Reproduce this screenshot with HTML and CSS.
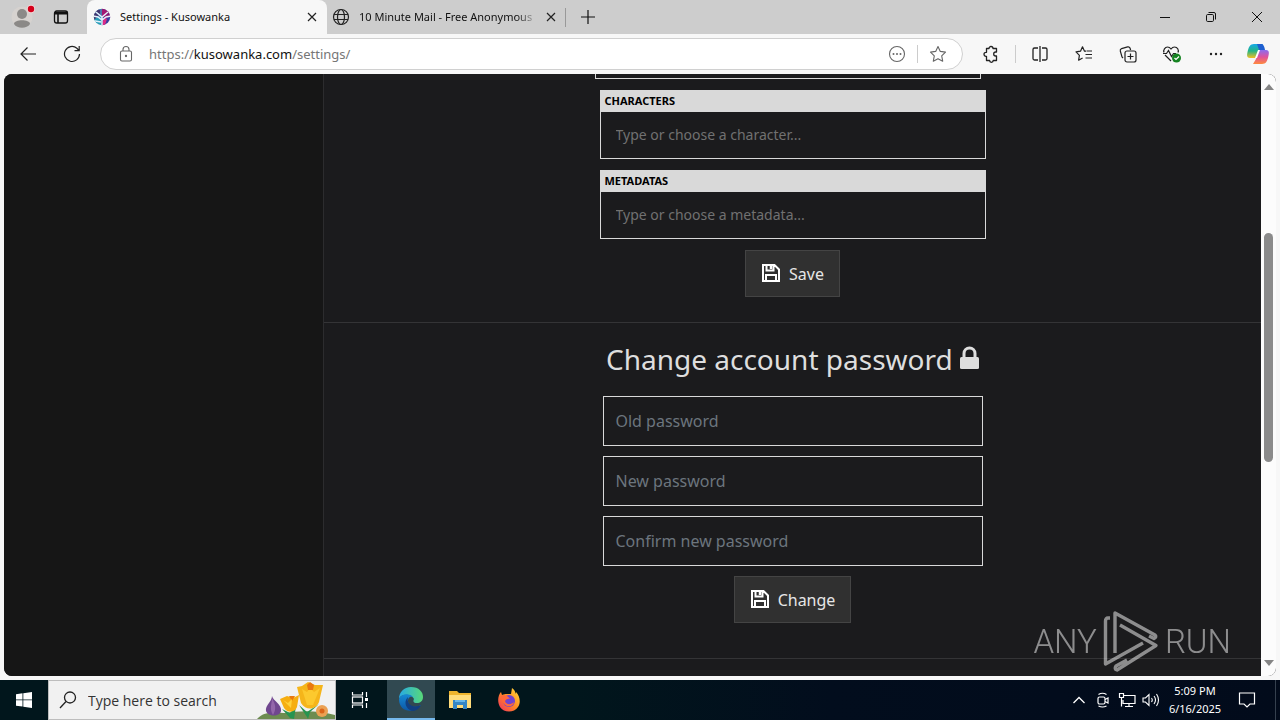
FILE: index.html
```html
<!DOCTYPE html>
<html lang="en">
<head>
<meta charset="utf-8">
<meta name="viewport" content="width=device-width, initial-scale=1">
<title>Settings - Kusowanka</title>
<link rel="stylesheet" href="styles.css">
</head>
<body>
<header class="tabstrip">
  <button class="profile" aria-label="Profile">
    <svg width="24" height="24" viewBox="0 0 24 24"><circle cx="11" cy="13" r="10.500" fill="#d6d2cf"/><circle cx="11" cy="10" r="5" fill="#8b8987"/><path d="M3 20c0-5 16-5 16 0-3 5-13 5-16 0z" fill="#8b8987"/><circle cx="20" cy="5" r="4.200" fill="#f1d6d6"/><circle cx="20" cy="5" r="3.200" fill="#d4001a"/></svg>
  </button>
  <button class="workspaces" aria-label="Tab actions">
    <svg width="16" height="16" viewBox="0 0 16 16" fill="none" stroke="#111" stroke-width="1.300"><rect x="1.500" y="2" width="13" height="12" rx="2.200"/><path d="M2 3.500h12M2 4.800h12M5 5v9" stroke-width="1.600"/></svg>
  </button>
  <div class="tab tab-active">
    <svg class="favicon" width="18" height="18" viewBox="0 0 18 18"><defs><clipPath id="round"><circle cx="9" cy="9" r="8.200"/></clipPath></defs><g clip-path="url(#round)"><path d="M0 0h9v10H0z" fill="#4d78ad"/><path d="M9 0h9v10H9z" fill="#7c1d78"/><path d="M0 9h9v9H0z" fill="#279cb8"/><path d="M9 9h9v9H9z" fill="#3a3c9f"/><path d="M9 1l5 2 1 7-4-2-2 1z" fill="#a31873"/><path d="M11 9l3 2-2 6h-3z" fill="#dc2b86"/><path d="M1 4l5 3-5 5zM3 1l4 1v4L3 4z" fill="#41366f"/><path d="M0 8l5 1 4 3 4-3 5-1M3 4l6 5 6-5M9 9v9M2 13l6 1" stroke="#e4f1fb" stroke-width="1.400" fill="none"/></g></svg>
    <span class="tab-title">Settings - Kusowanka</span>
    <button class="tab-close" aria-label="Close tab"><svg width="10" height="10" viewBox="0 0 10 10" stroke="#222" stroke-width="1.200"><path d="M1 1l8 8M9 1L1 9"/></svg></button>
  </div>
  <div class="tab">
    <svg class="favicon" width="18" height="18" viewBox="0 0 18 18" fill="none" stroke="#222" stroke-width="1.200"><circle cx="9" cy="9" r="7.500"/><ellipse cx="9" cy="9" rx="3.500" ry="7.500"/><path d="M2 6.500h14M2 11.500h14"/></svg>
    <span class="tab-title tab-fade">10 Minute Mail - Free Anonymous</span>
    <button class="tab-close" aria-label="Close tab"><svg width="10" height="10" viewBox="0 0 10 10" stroke="#222" stroke-width="1.200"><path d="M1 1l8 8M9 1L1 9"/></svg></button>
  </div>
  <button class="new-tab" aria-label="New tab"><svg width="14" height="14" viewBox="0 0 14 14" stroke="#111" stroke-width="1.200"><path d="M7 0v14M0 7h14"/></svg></button>
  <div class="window-controls">
    <button aria-label="Minimize"><svg width="12" height="12" viewBox="0 0 12 12" stroke="#111"><path d="M1 6.500h10"/></svg></button>
    <button aria-label="Restore"><svg width="12" height="12" viewBox="0 0 12 12" fill="none" stroke="#111"><rect x="1.500" y="3.500" width="7" height="7" rx="1.200"/><path d="M3.500 1.500H9a1.500 1.500 0 0 1 1.500 1.500v5.500"/></svg></button>
    <button aria-label="Close"><svg width="12" height="12" viewBox="0 0 12 12" stroke="#111"><path d="M1 1l10 10M11 1L1 11"/></svg></button>
  </div>
</header>

<nav class="toolbar">
  <button class="tool" aria-label="Back"><svg width="18" height="18" viewBox="0 0 18 18" fill="none" stroke="#222" stroke-width="1.200"><path d="M17 9H2M8.500 2.500L2 9l6.500 6.500"/></svg></button>
  <button class="tool" aria-label="Refresh"><svg width="18" height="18" viewBox="0 0 18 18" fill="none" stroke="#222" stroke-width="1.200"><path d="M16.500 9a7.500 7.500 0 1 1-2.600-5.700L16 5.500M16.200 1v4.700h-4.700"/></svg></button>
  <div class="address">
    <svg width="14" height="18" viewBox="0 0 14 18" fill="none" stroke="#666" stroke-width="1.100"><rect x="1.500" y="6" width="11" height="10" rx="1.500"/><path d="M4 6V4.500a3 3 0 0 1 6 0V6"/><circle cx="7" cy="11" r=".6" fill="#555"/></svg>
    <a class="url" href="#">https://<b>kusowanka.com</b>/settings/</a>
    <button class="address-btn" aria-label="More actions"><svg width="18" height="18" viewBox="0 0 18 18" fill="none" stroke="#666" stroke-width="1.100"><circle cx="9" cy="9" r="7.500"/><g fill="#666" stroke="none"><circle cx="5.500" cy="9" r="1"/><circle cx="9" cy="9" r="1"/><circle cx="12.500" cy="9" r="1"/></g></svg></button>
    <span class="divider"></span>
    <button class="address-btn" aria-label="Favorite"><svg width="18" height="18" viewBox="0 0 18 18" fill="none" stroke="#666" stroke-width="1.100" stroke-linejoin="round"><path d="M9 1.500l2.300 4.900 5.200.7-3.800 3.700 1 5.400L9 13.700l-4.700 2.500 1-5.400L1.500 7.100l5.200-.7z"/></svg></button>
  </div>
  <button class="tool" aria-label="Extensions"><svg width="18" height="18" viewBox="0 0 18 18" fill="none" stroke="#222" stroke-width="1.300" stroke-linejoin="round"><path d="M4.500 3.500H7a2 2 0 0 1 4 0h3.500V7h-.8a1.900 1.900 0 0 0 0 4h.8v4.500h-3.300a1.800 1.800 0 0 1-3.600 0H4.500v-4.200H4a2 2 0 0 1 0-4h.5z"/></svg></button>
  <span class="divider"></span>
  <button class="tool" aria-label="Split screen"><svg width="18" height="18" viewBox="0 0 18 18" fill="none" stroke="#222" stroke-width="1.300"><path d="M7 3H3.500A1.500 1.500 0 0 0 2 4.500v9A1.500 1.500 0 0 0 3.500 15H7M11 3h3.500A1.500 1.500 0 0 1 16 4.500v9a1.500 1.500 0 0 1-1.500 1.500H11M9 1v16"/></svg></button>
  <button class="tool" aria-label="Favorites"><svg width="18" height="18" viewBox="0 0 18 18" fill="none" stroke="#222" stroke-width="1.200" stroke-linejoin="round"><path d="M11 6.200H9.500L7.500 1.800 5.500 6.200l-4.500.7 3.400 3.400-.8 4.900 4-2.200M11.500 6H17M10.500 9.500H17M10.500 13H17"/></svg></button>
  <button class="tool" aria-label="Collections"><svg width="18" height="18" viewBox="0 0 18 18" fill="none" stroke="#222" stroke-width="1.200"><rect x="6" y="6" width="11" height="11" rx="2"/><path d="M11.500 8.500v6M8.500 11.500h6M4 13l-1-1-1.700-6a2 2 0 0 1 1.300-2.400l6-1.700A2 2 0 0 1 11 3l.6 2"/></svg></button>
  <button class="tool" aria-label="Browser essentials"><svg width="20" height="18" viewBox="0 0 20 18" fill="none" stroke="#222" stroke-width="1.200"><path d="M9 16L3 10M2 7.500C1 5 3 2 5.500 2 7.500 2 9 4 9 4s1.500-2 3.500-2C15.500 2 17 5 16 7.500M1 8.500h3.500l2-3 3 6 2-3H14"/><circle cx="14.500" cy="13" r="4.500" fill="#158321" stroke="none"/><path d="M12.500 13l1.500 1.500 3-3" stroke="#fff"/></svg></button>
  <button class="tool" aria-label="Settings and more"><svg width="16" height="16" viewBox="0 0 16 16" fill="#222"><circle cx="3" cy="8" r="1.200"/><circle cx="8" cy="8" r="1.200"/><circle cx="13" cy="8" r="1.200"/></svg></button>
  <button class="tool copilot" aria-label="Copilot"><svg width="24" height="22" viewBox="0 0 24 22"><defs><linearGradient id="ca" x2="0" y2="1"><stop stop-color="#16a9e8"/><stop offset=".5" stop-color="#24b585"/><stop offset="1" stop-color="#f4c022"/></linearGradient><linearGradient id="cb" x2="0" y2="1"><stop stop-color="#8a6cf0"/><stop offset=".5" stop-color="#e0529c"/><stop offset="1" stop-color="#ff8a3c"/></linearGradient></defs><path d="M8 1h9l-3 5-3 9H4c-4 0-3-4-2-8 1-3 2-6 6-6z" fill="url(#ca)"/><path d="M16 21H7l3-5 3-9h7c4 0 3 4 2 8-1 3-2 6-6 6z" fill="url(#cb)"/><path d="M11 1h4c2 0 3 1 4 6h-6z" fill="#1f5fd0"/><path d="M12 7h2l-3 8H9z" fill="#fff"/></svg></button>
</nav>

<div class="viewport">
  <aside class="sidebar"></aside>
  <main class="content">
    <form class="section tags">
      <div class="tag-box-end"></div>
      <div class="tag-box">
        <label for="characters">CHARACTERS</label>
        <input id="characters" type="text" placeholder="Type or choose a character...">
      </div>
      <div class="tag-box">
        <label for="metadatas">METADATAS</label>
        <input id="metadatas" type="text" placeholder="Type or choose a metadata...">
      </div>
      <button class="submit" type="button"><svg width="20" height="20" viewBox="0 0 20 20" fill="none" stroke="#fff" stroke-width="2"><path d="M2 1h11.500L18 5.500V17H2zM5 17v-6h10v6M5.500 1v5.500h7V1"/><path d="M10 2v3" stroke-width="2.500"/></svg>Save</button>
    </form>
    <form class="section password">
      <h1>Change account password <svg width="19" height="24" viewBox="0 0 19 24"><path d="M4 11V7.500a5.500 5.500 0 0 1 11 0V11" fill="none" stroke="#dedede" stroke-width="3"/><rect y="11" width="19" height="12" rx="1.500" fill="#dedede"/></svg></h1>
      <input type="password" placeholder="Old password" aria-label="Old password">
      <input type="password" placeholder="New password" aria-label="New password">
      <input type="password" placeholder="Confirm new password" aria-label="Confirm new password">
      <button class="submit" type="button"><svg width="20" height="20" viewBox="0 0 20 20" fill="none" stroke="#fff" stroke-width="2"><path d="M2 1h11.500L18 5.500V17H2zM5 17v-6h10v6M5.500 1v5.500h7V1"/><path d="M10 2v3" stroke-width="2.500"/></svg>Change</button>
    </form>
  </main>
  <div class="scrollbar">
    <svg width="10" height="6" viewBox="0 0 10 6"><path d="M5 0l5 6H0z" fill="#858585"/></svg>
    <div class="track"><div class="thumb"></div></div>
    <svg width="10" height="6" viewBox="0 0 10 6"><path d="M5 6l5-6H0z" fill="#858585"/></svg>
  </div>
  <div class="watermark">
    <span>ANY</span>
    <svg width="56" height="62" viewBox="0 0 56 62" fill="none" stroke="#fff" stroke-width="3.400" stroke-linejoin="round"><path d="M7 8H5Q2.500 8 2.500 11v43L40 33"/><path d="M12 43V3l40 22q2 2-1 3.500L46 26"/><path d="M17 15l36 20.500L14 60q-3-1-1-4l11-6"/></svg>
    <span>RUN</span>
  </div>
</div>

<footer class="taskbar">
  <button class="start" aria-label="Start"><svg width="16" height="16" viewBox="0 0 16 16" fill="#fff"><path d="M0 2.300L6.500 1.300v6.200H0zM7.300 1.200L16 0v7.500H7.300zM0 8.300h6.500v6.300L0 13.700zM7.300 8.300H16V16l-8.700-1.200z"/></svg></button>
  <div class="search">
    <svg width="18" height="18" viewBox="0 0 18 18" fill="none" stroke="#222" stroke-width="1.300"><circle cx="11" cy="6.500" r="5.500"/><path d="M7 10.500L1 17"/></svg>
    <input type="text" placeholder="Type here to search" aria-label="Type here to search">
    <svg class="flowers" width="80" height="38" viewBox="0 0 80 38"><path d="M2 38c8-9 20-6 29-6 12-2 30-3 49 2v4z" fill="#6d8c50"/><path d="M35 37l-8-9 8 4 6-7-2 13zM52 36l-8-12 8 7 12-8-9 8-2 7z" fill="#259450"/><path d="M17 15c1 5 10 8 9 15-1 6-13 6-15 0-1-6 6-9 6-15z" fill="#70478f"/><path d="M17 17c0 6-3 10 1 17 4-7 2-11-1-17z" fill="#9367aa"/><path d="M25 18l7-3 6 2 6-3-2 12c-2 6-10 6-13 1z" fill="#f6ae10"/><path d="M42 6l5-1 6-4 7 3 8 0-4 17c-3 8-13 9-18 1z" fill="#f5b51a"/><path d="M47 8l5 3 3-4 4 4 6-4-7 17h-6z" fill="#fcc92e"/><path d="M52 4l3-3 4 3-1 5h-5zM34 15h6l-3 5z" fill="#e9780e"/><path d="M28 19l5 3 4-4-1 9z" fill="#ffd13a"/><circle cx="67" cy="30" r="6" fill="#eba153"/><circle cx="67" cy="30" r="2.500" fill="#dc6518"/></svg>
  </div>
  <div class="apps">
    <button class="app" aria-label="Task view"><svg width="18" height="18" viewBox="0 0 18 18" fill="none" stroke="#fff" stroke-width="1.200"><path d="M1.500 1v3h10V1M1.500 17v-3h10v3M15.500 1v5M15.500 12v5"/><rect x="1.500" y="6" width="10" height="6"/><path d="M14 8.500h3" stroke-width="3"/></svg></button>
    <button class="app app-active" aria-label="Microsoft Edge"><svg width="26" height="26" viewBox="0 0 26 26"><defs><linearGradient id="ed" x2="1"><stop stop-color="#27a9e5"/><stop offset="1" stop-color="#58d978"/></linearGradient><linearGradient id="eb" x2="0" y2="1"><stop stop-color="#168ad5"/><stop offset="1" stop-color="#0d57a5"/></linearGradient></defs><path d="M1 13C1 6 6 1 13 1c8 0 12 5 12 10 0 4-3 6-6 6-4 0-4-2-3-4C14 8 3 7 1 13z" fill="url(#ed)"/><path d="M1 13C3 7 12 7 15 11c-4-1-5 2-5 4 0 5 6 8 13 4-5 8-22 9-22-6z" fill="url(#eb)"/><path d="M10 11c-5 5-2 12 4 14 4 0 7-2 9-6-8 4-15-1-13-8z" fill="#123f80"/></svg></button>
    <button class="app" aria-label="File Explorer"><svg width="24" height="20" viewBox="0 0 24 20"><path d="M1 1h8l2 2h12v15H1z" fill="#eeb42d"/><path d="M1 5h22v13H1z" fill="#ffdc7b"/><path d="M5 19v-9h14v9h-4v-4H9v4z" fill="#3486c5"/><path d="M7 10h10v2H7z" fill="#67b7ea"/></svg></button>
    <button class="app" aria-label="Firefox"><svg width="24" height="24" viewBox="0 0 24 24"><defs><linearGradient id="ff" x1="1" x2="0" y2="1"><stop stop-color="#ffe23d"/><stop offset=".5" stop-color="#ff8a22"/><stop offset="1" stop-color="#f12b64"/></linearGradient></defs><path d="M15 0c3 2 3 4 4 6V4c4 4 5 11 2 15-4 6-14 6-18 0C0 14 1 7 4 4l1 3c2-1 3-1 5-1l4 0z" fill="url(#ff)"/><circle cx="12" cy="13" r="6" fill="#7043cf"/><path d="M4 8c4-2 7 0 9 3-3-1-4 1-5 2 1 4 6 4 9 1-1 7-12 6-13-6z" fill="#ff6839"/></svg></button>
  </div>
  <div class="tray">
    <button class="tray-icon" aria-label="Show hidden icons"><svg width="14" height="14" viewBox="0 0 14 14" fill="none" stroke="#fff" stroke-width="1.300"><path d="M1.500 10L7 4.500l5.500 5.500"/></svg></button>
    <button class="tray-icon" aria-label="Meet now"><svg width="14" height="16" viewBox="0 0 14 16" fill="none" stroke="#fff" stroke-width="1.200"><rect x="2" y="5" width="7" height="7" rx="1.500"/><path d="M9 7.500l3-1.500v5l-3-1.500M2.500 2.500q4-2.500 8 0M2.500 14q4 2 8 0"/></svg></button>
    <button class="tray-icon" aria-label="Network"><svg width="18" height="16" viewBox="0 0 18 16" fill="none" stroke="#fff" stroke-width="1.200"><path d="M6 3.500h11v8H5V8M11 11.500v3M7 14.500h8M1.500 1.500h4v4h-4zM3.500 5.500v9"/></svg></button>
    <button class="tray-icon" aria-label="Volume"><svg width="18" height="14" viewBox="0 0 18 14" fill="none" stroke="#fff" stroke-width="1.100"><path d="M1 5h2.500L7 1.500v11L3.500 9H1zM9.500 5q1.500 2 0 4M12 3q3 4 0 8M14.500 1q4 6 0 12"/></svg></button>
    <div class="clock"><span>5:09 PM</span><span>6/16/2025</span></div>
    <button class="notices" aria-label="Notifications"><svg width="18" height="18" viewBox="0 0 18 18" fill="none" stroke="#fff" stroke-width="1.200"><path d="M1.500 2h15v11H12l-3 3-3-3H1.500z"/></svg></button>
  </div>
</footer>
</body>
</html>
```

FILE: styles.css
```css
* { box-sizing: border-box; }

body {
  margin: 0;
  height: 100vh;
  display: flex;
  flex-direction: column;
  overflow: hidden;
  background: #f7f7f7;
  font-family: "Noto Sans", "Open Sans", sans-serif;
}

button {
  display: flex;
  align-items: center;
  justify-content: center;
  flex: none;
  padding: 0;
  border: 0;
  background: none;
  font: inherit;
}

svg { flex: none; }

/* Tab strip */
.tabstrip {
  display: flex;
  flex: none;
  height: 34px;
  background: #cdcdcd;
  font-size: 11px;
  color: #111;
}
.profile { width: 45px; padding-bottom: 2px; }
.workspaces { width: 31px; }
.tab {
  display: flex;
  align-items: center;
  width: 239px;
  padding: 0 9px 0 5px;
  border-right: 1px solid transparent;
  background: #cdcdcd;
}
.tab:not(.tab-active) { border-image: linear-gradient(transparent 25%, #999 25%, #999 78%, transparent 78%) 1; border-width: 0 1px 0 0; }
.tab-active {
  width: 240px;
  margin-left: 11px;
  padding-left: 6px;
  border-radius: 8px 8px 0 0;
  background: #f7f7f7;
}
.tab-title {
  flex: 1;
  min-width: 0;
  margin: 0 8px 0 9px;
  overflow: hidden;
  white-space: nowrap;
  line-height: 18px;
}
.tab-fade { mask-image: linear-gradient(90deg, #000 88%, transparent); }
.tab-close { width: 10px; height: 24px; }
.new-tab { width: 44px; }
.window-controls { display: flex; margin-left: auto; }
.window-controls button { width: 46px; }

/* Toolbar */
.toolbar {
  display: flex;
  flex: none;
  align-items: center;
  height: 40px;
  padding: 0 2px 0 6px;
}
.tool { width: 44px; height: 32px; }
.copilot { width: 40px; }
.divider { flex: none; width: 1px; height: 18px; margin: 0 2px; background: #ccc; }
.address {
  display: flex;
  flex: 1;
  align-items: center;
  height: 32px;
  margin: 0 6px;
  padding: 0 6px 0 18px;
  border: 1px solid #d0d0d0;
  border-radius: 16px;
  background: #fff;
}
.url {
  flex: 1;
  margin-left: 16px;
  color: #767676;
  font-size: 13px;
  text-decoration: none;
}
.url b { color: #111; font-weight: 400; }
.address-btn { width: 36px; height: 28px; }

/* Page */
.viewport {
  position: relative;
  display: flex;
  flex: 1;
  min-height: 0;
  margin: 0 4px 4px;
  overflow: hidden;
  border-radius: 8px;
  background: #1b1b1d;
}
.sidebar { flex: 0 0 320px; background: #161616; border-right: 1px solid #2c2c2e; }
.content { flex: 1; overflow: hidden; }
.section {
  display: flex;
  flex-direction: column;
  align-items: center;
  border-bottom: 1px solid #343436;
}
.tags { padding-bottom: 25px; }
.tag-box-end {
  width: 386px;
  height: 5px;
  margin: 0 10px 11px 0;
  border: 1px solid #d9d9d9;
  border-top: 0;
}
.tag-box {
  display: flex;
  flex-direction: column;
  width: 386px;
  margin-bottom: 11px;
  border: 1px solid #d9d9d9;
}
.tag-box label {
  padding: 0 4px 2px;
  background: #d9d9d9;
  color: #000;
  font-size: 11px;
  font-weight: 700;
  line-height: 19px;
}
.tag-box input {
  height: 46px;
  padding: 0 15px 2px;
  border: 0;
  background: transparent;
  color: #ddd;
  font: 14px "Noto Sans", sans-serif;
}
.tag-box input::placeholder { color: #717171; }
.submit {
  gap: 8px;
  height: 47px;
  padding: 0 15px;
  border: 1px solid #444;
  background: #303030;
  color: #e6e6e6;
  font-size: 16px;
}
.password { gap: 10px; padding: 16px 0 35px; }
.password h1 {
  margin: 0 0 7px;
  color: #dedede;
  font-size: 28px;
  font-weight: 400;
  line-height: 40px;
}
.password input {
  width: 380px;
  height: 50px;
  padding: 0 12px;
  border: 1px solid #d9d9d9;
  background: transparent;
  color: #ddd;
  font: 16px "Noto Sans", sans-serif;
}
.password input::placeholder { color: #6c757d; }

.scrollbar {
  display: flex;
  flex: none;
  flex-direction: column;
  align-items: center;
  width: 15px;
  padding: 10px 0;
  background: #fcfcfc;
}
.track {
  display: flex;
  flex: 1;
  flex-direction: column;
  margin: 2px 0;
}
.track::before { content: ""; flex: 141; }
.track::after { content: ""; flex: 196; }
.thumb { flex: 229; width: 9px; border-radius: 5px; background: #8b8b8b; }

.watermark {
  position: absolute;
  right: 45px;
  bottom: 4px;
  display: flex;
  align-items: center;
  gap: 6px;
  color: #fff;
  font: 300 33px Roboto, sans-serif;
  opacity: 0.5;
  pointer-events: none;
}

/* Taskbar */
.taskbar {
  display: flex;
  flex: none;
  height: 40px;
  background: linear-gradient(90deg, #01161c, #01161c 45%, #020d1d 65%, #020b1b);
  color: #fff;
}
.start { width: 48px; }
.search {
  display: flex;
  align-items: center;
  width: 288px;
  padding-left: 10px;
  border: 1px solid #bdbdbd;
  background: #f1f1f1;
}
.search input {
  flex: 1;
  min-width: 0;
  padding: 0 0 0 11px;
  border: 0;
  background: transparent;
  font: 14px "Open Sans", "Noto Sans", sans-serif;
}
.search input::placeholder { color: #333; }
.apps { display: flex; gap: 1px; }
.app { width: 48px; }
.app:first-child { margin-right: 2px; }
.app-active { background: #314951; border-bottom: 2px solid #76b9ed; }
.tray { display: flex; margin-left: auto; padding-right: 4px; }
.tray-icon { width: 24px; }
.clock {
  display: flex;
  flex-direction: column;
  align-items: center;
  justify-content: center;
  width: 64px;
  font-size: 11px;
  line-height: 18px;
}
.notices { width: 49px; padding-right: 8px; border-right: 1px solid #35404e; }
```
